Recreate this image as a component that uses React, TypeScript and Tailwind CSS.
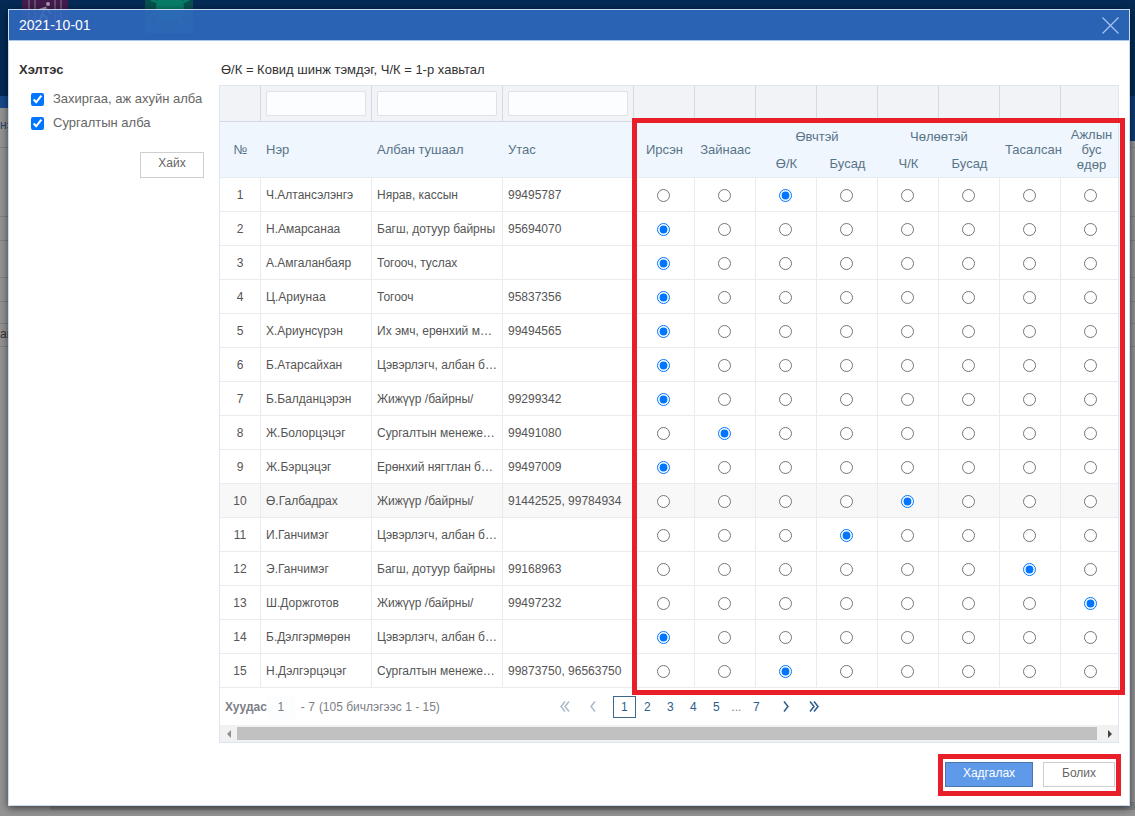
import * as React from "react";

type Status = {
  key: string;
  label: string;
};

type Employee = {
  name: string;
  position: string;
  phone: string;
  status: string;
};

const STATUSES: Status[] = [
  { key: "present", label: "Ирсэн" },
  { key: "remote", label: "Зайнаас" },
  { key: "sick-covid", label: "Өвчтэй Ө/К" },
  { key: "sick-other", label: "Өвчтэй Бусад" },
  { key: "leave-contact", label: "Чөлөөтэй Ч/К" },
  { key: "leave-other", label: "Чөлөөтэй Бусад" },
  { key: "absent", label: "Тасалсан" },
  { key: "day-off", label: "Ажлын бус өдөр" },
];

const EMPLOYEES: Employee[] = [
  { name: "Ч.Алтансэлэнгэ", position: "Нярав, кассын", phone: "99495787", status: "sick-covid" },
  { name: "Н.Амарсанаа", position: "Багш, дотуур байрны", phone: "95694070", status: "present" },
  { name: "А.Амгаланбаяр", position: "Тогооч, туслах", phone: "", status: "present" },
  { name: "Ц.Ариунаа", position: "Тогооч", phone: "95837356", status: "present" },
  { name: "Х.Ариунсүрэн", position: "Их эмч, ерөнхий м…", phone: "99494565", status: "present" },
  { name: "Б.Атарсайхан", position: "Цэвэрлэгч, албан б…", phone: "", status: "present" },
  { name: "Б.Балданцэрэн", position: "Жижүүр /байрны/", phone: "99299342", status: "present" },
  { name: "Ж.Болорцэцэг", position: "Сургалтын менеже…", phone: "99491080", status: "remote" },
  { name: "Ж.Бэрцэцэг", position: "Ерөнхий нягтлан б…", phone: "99497009", status: "present" },
  { name: "Ө.Галбадрах", position: "Жижүүр /байрны/", phone: "91442525, 99784934", status: "leave-contact" },
  { name: "И.Ганчимэг", position: "Цэвэрлэгч, албан б…", phone: "", status: "sick-other" },
  { name: "Э.Ганчимэг", position: "Багш, дотуур байрны", phone: "99168963", status: "absent" },
  { name: "Ш.Доржготов", position: "Жижүүр /байрны/", phone: "99497232", status: "day-off" },
  { name: "Б.Дэлгэрмөрөн", position: "Цэвэрлэгч, албан б…", phone: "", status: "present" },
  { name: "Н.Дэлгэрцэцэг", position: "Сургалтын менеже…", phone: "99873750, 96563750", status: "sick-covid" },
];

const HIGHLIGHTED_ROW = 9;

export default function App() {
  return (
    <div className="relative min-h-screen overflow-hidden bg-[#949494] pt-[9px] pr-[5px] pb-[10px] pl-2 font-['Liberation_Sans',Arial,sans-serif]">
      <Backdrop />
      <div
        role="dialog"
        aria-labelledby="dialog-title"
        className="relative border border-[#c9dcf3] shadow-[0_2px_8px_rgba(0,0,0,0.6)]"
      >
        <header className="flex h-[31px] items-center justify-between border-b border-[#a9c6ec] bg-[#3069bf]/90 pr-2.5 pl-2.5">
          <h1 id="dialog-title" className="text-sm text-white">
            2021-10-01
          </h1>
          <button type="button" aria-label="Хаах" className="text-[#a3c6f5]">
            <svg width="17" height="17" viewBox="0 0 17 17" fill="none" stroke="currentColor" strokeWidth="1.2">
              <path d="M.5.5l16 16M16.5.5l-16 16" />
            </svg>
          </button>
        </header>

        <div className="bg-white pr-2.5 pb-[9px] pl-2.5">
          <div className="flex">
            <DepartmentFilter />
            <main className="min-w-0 flex-1">
              <p className="pt-5 pb-1.5 pl-0.5 text-[13px] leading-[18px] text-[#333]">
                Ө/К = Ковид шинж тэмдэг, Ч/К = 1-р хавьтал
              </p>
              <div className="border border-[#dce6f0]">
                <div className="relative">
                  <div className="overflow-hidden">
                    <AttendanceTable />
                  </div>
                  <div className="pointer-events-none absolute top-8 -right-[7px] -bottom-[7px] left-[412px] border-5 border-[#e81e28]" />
                </div>
                <Pager />
                <ScrollBar />
              </div>
            </main>
          </div>

          <footer className="flex justify-end pt-[11px]">
            <div className="-mr-0.5 flex gap-2.5 border-5 border-[#e81e28] pt-[3px] pr-px pb-1 pl-0.5">
              <button
                type="button"
                className="h-[25px] w-[88px] border border-[#4a76a8] bg-[#5f9aea] pb-1 text-xs text-white"
              >
                Хадгалах
              </button>
              <button
                type="button"
                className="h-[25px] w-[72px] border border-[#cfcfcf] bg-white pb-1 text-xs text-[#666]"
              >
                Болих
              </button>
            </div>
          </footer>
        </div>
      </div>
    </div>
  );
}

/* dimmed page that stays visible around the dialog */
function Backdrop() {
  return (
    <div aria-hidden="true" className="absolute inset-0 flex flex-col overflow-hidden">
      <div className="flex h-24 shrink-0 items-start bg-[#042b55] pl-[22px]">
        <svg width="46" height="34" viewBox="0 0 46 34">
          <rect width="46" height="32" fill="#431c4d" />
          <path d="M7 0v29h32V0M13 0v29M33 0v29" fill="none" stroke="#765b80" strokeWidth="1.5" />
          <circle cx="26" cy="4" r="2" fill="#a997ae" />
          <path d="M24 7l-4 7 5 4v8M20 15l-3 7M23 8l-6 2M25 9l4 5" fill="none" stroke="#a997ae" strokeWidth="2" />
        </svg>
        <svg width="48" height="34" viewBox="0 0 48 34" className="ml-[77px]">
          <rect width="48" height="33" fill="#07504f" />
          <circle cx="25" cy="7" r="14" fill="#087c66" />
          <path
            d="M25 20v6M17 17l-4 6M33 17l4 6M12 12l-6 3M38 12l6 3M12 2L7 0M38 2l5-2"
            stroke="#087c66"
            strokeWidth="2.5"
            strokeLinecap="round"
          />
        </svg>
      </div>
      <div className="flex h-[45px] shrink-0 justify-between">
        <div className="h-3 w-1/2 bg-[#174a8a]" />
        <div className="h-full w-1/2 bg-[#0f3c74]" />
      </div>
      <div className="-mt-6 pb-[14px] text-xs leading-4 text-[#2a4470]">нэ</div>
      <div className="h-[69px] border-t border-[#828282]" />
      <div className="h-6 border-t border-[#828282]" />
      <div className="h-[37px] border-t border-[#828282]" />
      <div className="h-6 border-t border-[#828282]" />
      <div className="h-[22px] border-t border-[#828282]" />
      <div className="h-6 border-t border-b border-[#828282] text-xs leading-5 text-[#333]">ай</div>
      <div className="mt-auto mb-1.5 ml-[50px] h-2 bg-[#7f8283]" />
    </div>
  );
}

function DepartmentFilter() {
  return (
    <aside className="w-[200px] shrink-0 pt-5 text-[#666]">
      <h2 className="text-[13px] leading-[18px] font-bold text-[#333]">Хэлтэс</h2>
      <div className="mt-2 pl-3 text-[13px] leading-6">
        <label className="flex items-center gap-[9px]">
          <input type="checkbox" defaultChecked className="h-[13px] w-[13px]" />
          Захиргаа, аж ахуйн алба
        </label>
        <label className="flex items-center gap-[9px]">
          <input type="checkbox" defaultChecked className="h-[13px] w-[13px]" />
          Сургалтын алба
        </label>
      </div>
      <div className="mt-[17px] flex justify-end pr-[15px]">
        <button type="button" className="h-[26px] w-16 border border-[#cfcfcf] bg-white pb-1 text-xs">
          Хайх
        </button>
      </div>
    </aside>
  );
}

function AttendanceTable() {
  return (
    <table className="w-full min-w-[902px] table-fixed border-separate border-spacing-0">
      <colgroup>
        <col className="w-[41px]" />
        <col className="w-[111px]" />
        <col className="w-[131px]" />
        <col className="w-[131px]" />
        {STATUSES.map((s) => (
          <col key={s.key} className="w-[61px]" />
        ))}
      </colgroup>
      <thead className="text-[13px] leading-[15px] text-[#587488]">
        <tr className="h-9 bg-[#f1f3f7]">
          <FilterCell />
          <FilterCell label="Нэр" />
          <FilterCell label="Албан тушаал" />
          <FilterCell label="Утас" />
          {STATUSES.map((s) => (
            <FilterCell key={s.key} />
          ))}
        </tr>
        <tr className="h-7 bg-[#f0f6fe]">
          <HeadCell rowSpan={2}>№</HeadCell>
          <HeadCell rowSpan={2} left>Нэр</HeadCell>
          <HeadCell rowSpan={2} left>Албан тушаал</HeadCell>
          <HeadCell rowSpan={2} left>Утас</HeadCell>
          <HeadCell rowSpan={2}>Ирсэн</HeadCell>
          <HeadCell rowSpan={2}>Зайнаас</HeadCell>
          <th colSpan={2} className="p-0 font-normal">Өвчтэй</th>
          <th colSpan={2} className="p-0 font-normal">Чөлөөтэй</th>
          <HeadCell rowSpan={2} left>Тасалсан</HeadCell>
          <HeadCell rowSpan={2}>
            Ажлын
            <br />
            бус
            <br />
            өдөр
          </HeadCell>
        </tr>
        <tr className="h-7 bg-[#f0f6fe]">
          <HeadCell>Ө/К</HeadCell>
          <HeadCell>Бусад</HeadCell>
          <HeadCell>Ч/К</HeadCell>
          <HeadCell>Бусад</HeadCell>
        </tr>
      </thead>
      <tbody className="text-xs text-[#555]">
        {EMPLOYEES.map((employee, i) => (
          <tr key={employee.name} className={i === HIGHLIGHTED_ROW ? "h-[34px] bg-[#f8f8f8]" : "h-[34px]"}>
            <BodyCell kind="number">{i + 1}</BodyCell>
            <BodyCell>{employee.name}</BodyCell>
            <BodyCell>{employee.position}</BodyCell>
            <BodyCell>{employee.phone}</BodyCell>
            {STATUSES.map((s) => (
              <BodyCell key={s.key} kind="radio">
                <input
                  type="radio"
                  name={`status-${i}`}
                  aria-label={`${employee.name}: ${s.label}`}
                  defaultChecked={employee.status === s.key}
                  className="mx-auto block h-[13px] w-[13px]"
                />
              </BodyCell>
            ))}
          </tr>
        ))}
      </tbody>
    </table>
  );
}

function FilterCell({ label }: { label?: string }) {
  return (
    <td className="border-r border-b border-[#d5dae2] px-[5px] py-0">
      {label && (
        <input
          type="text"
          aria-label={label}
          className="block h-[25px] w-full rounded-xs border border-[#dde1e8] bg-[#fcfdff] px-1 text-xs"
        />
      )}
    </td>
  );
}

function HeadCell({
  rowSpan,
  left,
  children,
}: {
  rowSpan?: number;
  left?: boolean;
  children: React.ReactNode;
}) {
  return (
    <th
      rowSpan={rowSpan}
      className={
        left
          ? "border-b border-[#e6ebf1] py-0 pr-0 pl-[5px] text-left font-normal"
          : "border-b border-[#e6ebf1] p-0 text-center font-normal whitespace-nowrap"
      }
    >
      {children}
    </th>
  );
}

const bodyCellStyles = {
  text: "truncate border-r border-b border-[#e9ebee] py-0 pr-0 pl-[5px]",
  number: "border-r border-b border-[#e9ebee] p-0 text-center",
  radio: "border-r border-b border-[#e9ebee] pt-0.5 pr-0.5 pb-0 pl-0",
};

function BodyCell({
  kind = "text",
  children,
}: {
  kind?: keyof typeof bodyCellStyles;
  children: React.ReactNode;
}) {
  return <td className={bodyCellStyles[kind]}>{children}</td>;
}

function Pager() {
  return (
    <nav aria-label="Хуудас" className="flex h-[37px] items-center pl-[5px] text-xs text-[#7d8087]">
      <label htmlFor="page-number" className="text-xs font-bold">
        Хуудас
      </label>
      <input
        id="page-number"
        type="text"
        defaultValue="1"
        className="h-6 w-7 bg-[#fbfdff] text-center"
      />
      <span className="pl-1.5">- 7</span>
      <span className="pl-1">(105 бичлэгээс 1 - 15)</span>
      <div className="ml-[117px] flex items-center text-[#2c5c8c]">
        <button type="button" aria-label="Эхний хуудас" disabled className="mr-3 flex w-4 justify-center text-[#a9b9cb]">
          <Chevrons d="M5 .5L1 5.5l4 5M9 .5L5 5.5l4 5" />
        </button>
        <button type="button" aria-label="Өмнөх хуудас" disabled className="mr-3 flex w-4 justify-center text-[#a9b9cb]">
          <Chevrons d="M7 .5L3 5.5l4 5" />
        </button>
        <button type="button" aria-current="page" className="h-[22px] w-[23px] border border-[#3f668c]">
          1
        </button>
        {["2", "3", "4", "5"].map((page) => (
          <button key={page} type="button" className="w-[23px]">
            {page}
          </button>
        ))}
        <span className="w-[17px] text-center text-[#7d8087]">...</span>
        <button type="button" className="w-[23px]">
          7
        </button>
        <button type="button" aria-label="Дараах хуудас" className="ml-2.5 flex w-4 justify-center">
          <Chevrons d="M3 .5l4 5-4 5" />
        </button>
        <button type="button" aria-label="Сүүлийн хуудас" className="ml-3 flex w-4 justify-center">
          <Chevrons d="M1 .5l4 5-4 5M5 .5l4 5-4 5" />
        </button>
      </div>
    </nav>
  );
}

function Chevrons({ d }: { d: string }) {
  return (
    <svg width="10" height="11" viewBox="0 0 10 11" fill="none" stroke="currentColor" strokeWidth="1.5">
      <path d={d} />
    </svg>
  );
}

function ScrollBar() {
  return (
    <div className="flex h-[17px] items-center bg-[#f1f1f1]">
      <div className="flex w-[17px] justify-center">
        <svg width="4" height="8" viewBox="0 0 4 8" fill="#8f8f8f">
          <path d="M4 0v8L0 4z" />
        </svg>
      </div>
      <div className="h-[13px] flex-1 bg-[#c1c1c1]" />
      <div className="flex w-[21px] justify-center pl-1">
        <svg width="4" height="8" viewBox="0 0 4 8" fill="#444">
          <path d="M0 0v8l4-4z" />
        </svg>
      </div>
    </div>
  );
}
